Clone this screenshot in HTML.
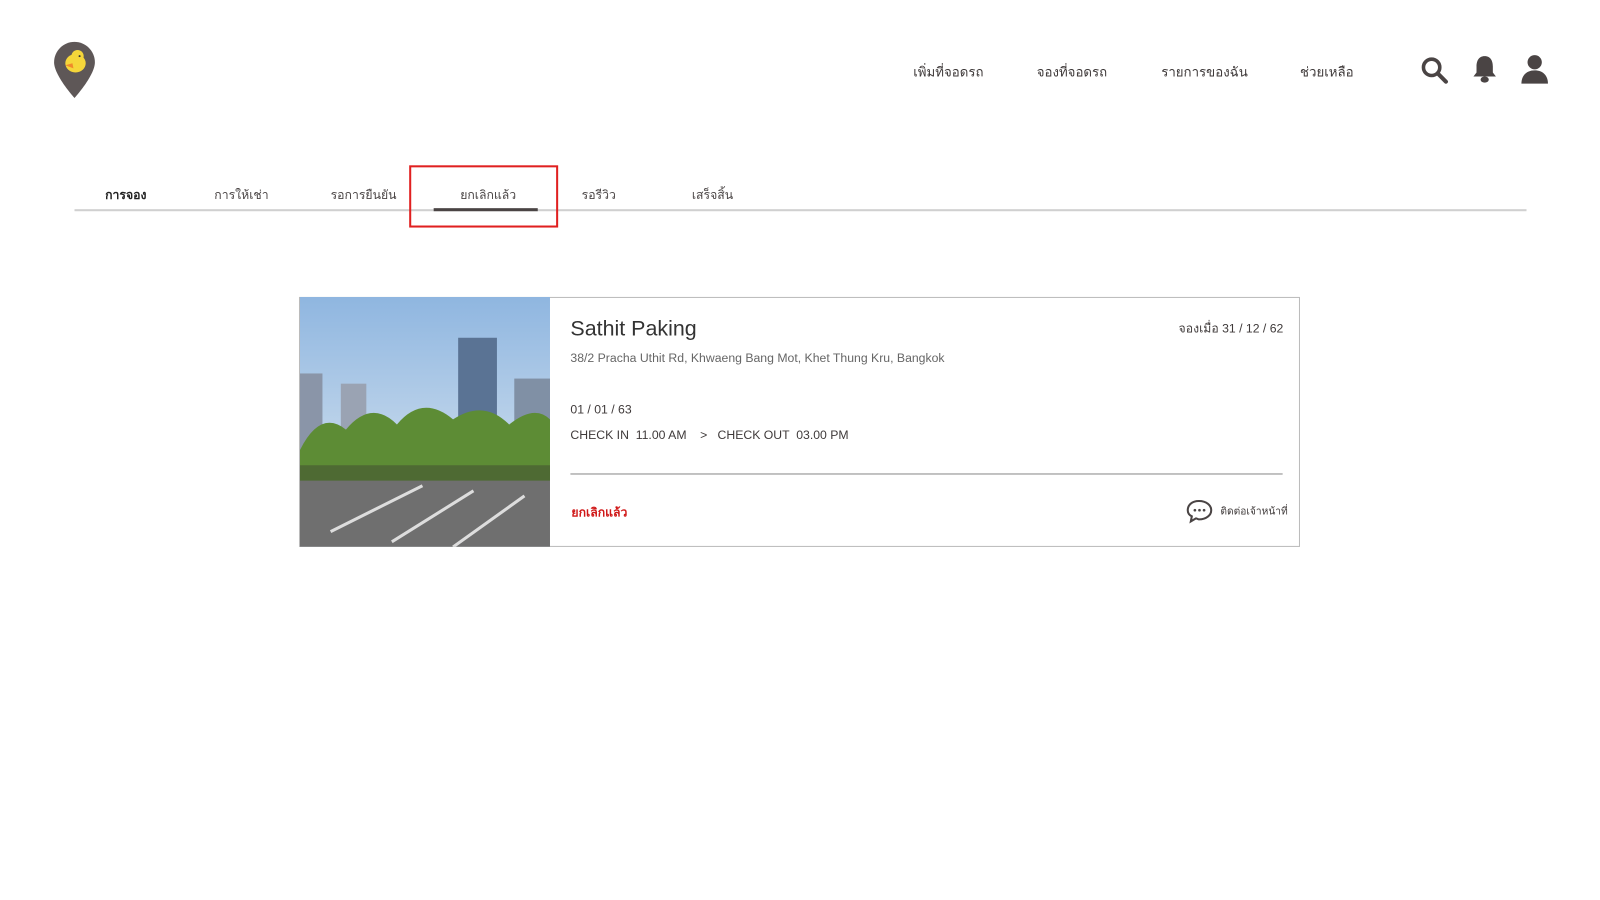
<!DOCTYPE html>
<html><head><meta charset="utf-8"><style>
body{margin:0;width:1600px;height:900px;background:#fff;font-family:"Liberation Sans","Noto Sans CJK SC",sans-serif;color:#3f3a3a;position:relative;overflow:hidden}
#w{position:absolute;left:0;top:0;width:1568px;height:882px;transform:scale(1.0204);transform-origin:0 0}
.a{position:absolute;white-space:nowrap}
.nav{font-size:13px;top:60px;color:#3f3a3a}
.tab{font-size:12px;top:182px;color:#4a4545}
</style></head><body><div id="w">
<svg class="a" style="left:52px;top:40px" width="42" height="58" viewBox="0 0 42 58">
<path d="M21 1C10 1 1 10 1 21c0 13 20 35 20 35s20-22 20-35C41 10 32 1 21 1z" fill="#5e5757"/>
<ellipse cx="22" cy="22" rx="10" ry="9" fill="#f5d63a"/><circle cx="24" cy="15" r="6" fill="#f5d63a"/>
<path d="M12 24l7-2 1 5z" fill="#f08a2a"/><circle cx="26" cy="15" r="1" fill="#333"/>
</svg>
<div class="a nav" style="left:895px">เพิ่มที่จอดรถ</div>
<div class="a nav" style="left:1016px">จองที่จอดรถ</div>
<div class="a nav" style="left:1138px">รายการของฉัน</div>
<div class="a nav" style="left:1274px">ช่วยเหลือ</div>
<svg class="a" style="left:1392px;top:55px" width="28" height="28" viewBox="0 0 28 28"><circle cx="11" cy="11" r="8" fill="none" stroke="#4a4444" stroke-width="3.5"/><path d="M17 17l8 8" stroke="#4a4444" stroke-width="4" stroke-linecap="round"/></svg>
<svg class="a" style="left:1441px;top:53px" width="28" height="30" viewBox="0 0 28 30"><path d="M14 2c-6 0-8 5-8 10v6l-3 4h22l-3-4v-6c0-5-2-10-8-10z" fill="#4a4444"/><ellipse cx="14" cy="25" rx="4" ry="3" fill="#4a4444"/></svg>
<svg class="a" style="left:1490px;top:52px" width="28" height="32" viewBox="0 0 28 32"><circle cx="14" cy="9" r="7" fill="#4a4444"/><path d="M1 30c0-8 5-13 13-13s13 5 13 13z" fill="#4a4444"/></svg>
<div class="a tab" style="left:103px;color:#222;font-weight:bold">การจอง</div>
<div class="a tab" style="left:210px">การให้เช่า</div>
<div class="a tab" style="left:324px">รอการยืนยัน</div>
<div class="a tab" style="left:451px">ยกเลิกแล้ว</div>
<div class="a tab" style="left:570px">รอรีวิว</div>
<div class="a tab" style="left:678px">เสร็จสิ้น</div>
<div class="a" style="left:73px;top:205px;width:1423px;height:2px;background:#d0d0d0"></div>
<div class="a" style="left:425px;top:204px;width:102px;height:3px;background:#4a4444"></div>
<div class="a" style="left:401px;top:162px;width:142px;height:57px;border:2px solid #e02020"></div>
<div class="a" style="left:293px;top:291px;width:979px;height:243px;border:1px solid #bbb"></div>
<svg class="a" style="left:294px;top:291px" width="245" height="245" viewBox="0 0 245 245">
<defs><linearGradient id="s" x1="0" y1="0" x2="0" y2="1"><stop offset="0" stop-color="#8fb6e0"/><stop offset="1" stop-color="#e2ebf2"/></linearGradient></defs>
<rect width="245" height="245" fill="url(#s)"/>
<rect x="0" y="75" width="22" height="80" fill="#8a95a8"/><rect x="40" y="85" width="25" height="70" fill="#9aa3b3"/>
<rect x="155" y="40" width="38" height="120" fill="#5a7394"/><rect x="210" y="80" width="35" height="80" fill="#8090a5"/>
<path d="M0 150 Q20 110 45 130 Q70 100 95 125 Q120 95 150 120 Q180 100 205 125 Q230 105 245 120 V175 H0z" fill="#5d8c35"/>
<path d="M0 175 H245 V245 H0z" fill="#6f6f6f"/><path d="M0 165 H245 V180 H0z" fill="#4e6a33"/>
<path d="M30 230 L120 185 M90 240 L170 190 M150 245 L220 195" stroke="#ddd" stroke-width="3"/>
</svg>
<div class="a" style="left:559px;top:311px;font-size:21px;color:#333">Sathit Paking</div>
<div class="a" style="left:1155px;top:313px;font-size:12px">จองเมื่อ 31 / 12 / 62</div>
<div class="a" style="left:559px;top:344px;font-size:12px;color:#666">38/2 Pracha Uthit Rd, Khwaeng Bang Mot, Khet Thung Kru, Bangkok</div>
<div class="a" style="left:559px;top:394px;font-size:12px">01 / 01 / 63</div>
<div class="a" style="left:559px;top:419px;font-size:12px">CHECK IN &nbsp;11.00 AM &nbsp; &nbsp;&gt; &nbsp; CHECK OUT &nbsp;03.00 PM</div>
<div class="a" style="left:559px;top:464px;width:698px;height:1px;background:#888"></div>
<div class="a" style="left:560px;top:493px;font-size:12px;color:#d01818;font-weight:bold">ยกเลิกแล้ว</div>
<svg class="a" style="left:1162px;top:489px" width="27" height="24" viewBox="0 0 27 24"><path d="M13 2C6 2 2 6 2 11c0 3 2 5 4 6l-1 5 5-3c1 0 2 1 3 1 7 0 12-4 12-9S20 2 13 2z" fill="none" stroke="#4a4444" stroke-width="2"/><circle cx="9" cy="11" r="1.3" fill="#4a4444"/><circle cx="13.5" cy="11" r="1.3" fill="#4a4444"/><circle cx="18" cy="11" r="1.3" fill="#4a4444"/></svg>
<div class="a" style="left:1196px;top:494px;font-size:10px">ติดต่อเจ้าหน้าที่</div>
</div></body></html>
